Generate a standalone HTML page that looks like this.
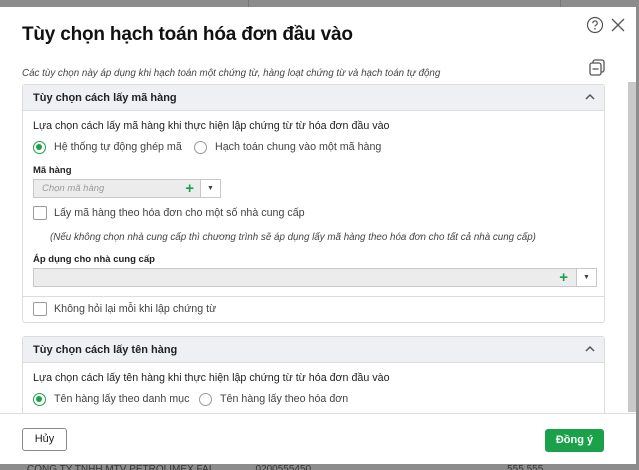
<!DOCTYPE html>
<html><head><meta charset="utf-8"><style>
*{box-sizing:border-box;margin:0;padding:0}
body{width:639px;height:470px;overflow:hidden;background:#8c8c8c;font-family:"Liberation Sans","DejaVu Sans",sans-serif;color:#212121;position:relative}
.bgline{position:absolute;top:0;width:1px;height:7px;background:#777}
.dlg{position:absolute;left:0;top:7px;width:636px;height:457px;background:#fff;overflow:hidden}
.abs{position:absolute}
h1{position:absolute;left:22px;top:17px;font-size:19px;font-weight:bold;color:#111;letter-spacing:-0.2px}
.sub{left:22px;top:61px;font-size:9.8px;font-style:italic;color:#444}
.sec{position:absolute;left:22px;width:583px;border:1px solid #dcdcdc;border-radius:3px;background:#fff}
.hd{height:26px;background:#eef0f4;border-bottom:1px solid #dcdcdc;font-size:11px;font-weight:bold;padding:7px 10px;position:relative;color:#222}
.hd .car{position:absolute;right:8px;top:6px}
.t{position:absolute;font-size:10.7px;color:#222;white-space:nowrap}
.radio{position:absolute;width:13px;height:13px;border-radius:50%;border:1px solid #999;background:#fff}
.radio.on{border:1.5px solid #1aa14a}
.radio.on::after{content:"";position:absolute;left:2px;top:2px;width:6px;height:6px;border-radius:50%;background:#1aa14a}
.cb{position:absolute;width:14px;height:14px;border:1px solid #999;border-radius:2px;background:#fff}
.inp{position:absolute;height:19px;border:1px solid #c8c8c8;background:#ececec}
.inp .plus{position:absolute;top:0;font-size:15px;line-height:17px;color:#1aa14a;font-weight:bold}
.inp .dd{position:absolute;right:0;top:0;width:20px;height:17px;border-left:1px solid #c8c8c8;background:#fff;font-size:7px;text-align:center;line-height:17px;color:#444}
.btn{position:absolute;font-size:11px;border-radius:3px;text-align:center}
</style></head><body>
<div class="bgline" style="left:248px"></div><div class="bgline" style="left:560px"></div>
<div class="dlg">
<h1>Tùy chọn hạch toán hóa đơn đầu vào</h1>
<svg class="abs" style="left:586px;top:9px" width="18" height="18" viewBox="0 0 18 18"><circle cx="9" cy="9" r="7.5" fill="none" stroke="#555" stroke-width="1.2"/><path d="M6.8 7.2a2.2 2.2 0 1 1 3 2c-.6.3-.8.7-.8 1.3" fill="none" stroke="#555" stroke-width="1.2"/><circle cx="9" cy="12.8" r=".8" fill="#555"/></svg>
<svg class="abs" style="left:610px;top:10px" width="16" height="16" viewBox="0 0 16 16"><path d="M2 2L14 14M14 2L2 14" stroke="#555" stroke-width="1.3"/></svg>
<div class="abs sub">Các tùy chọn này áp dụng khi hạch toán một chứng từ, hàng loạt chứng từ và hạch toán tự động</div>
<svg class="abs" style="left:589px;top:52px" width="17" height="18" viewBox="0 0 17 18"><rect x="1" y="4" width="11" height="12" rx="2" fill="none" stroke="#555" stroke-width="1.3"/><path d="M4 4V3a2 2 0 0 1 2-2h7a2 2 0 0 1 2 2v8a2 2 0 0 1-2 2h-1" fill="none" stroke="#555" stroke-width="1.3"/><path d="M3.5 10h6" stroke="#555" stroke-width="1.3"/></svg>
<div class="abs" style="left:628px;top:75px;width:8px;height:330px;background:#c9c9c9"></div>

<div class="sec" style="top:77px;height:239px">
 <div class="hd">Tùy chọn cách lấy mã hàng<svg class="car" width="12" height="12" viewBox="0 0 12 12"><path d="M2 8L6 4L10 8" fill="none" stroke="#555" stroke-width="1.5"/></svg></div>
 <div class="t" style="left:10px;top:35px">Lựa chọn cách lấy mã hàng khi thực hiện lập chứng từ từ hóa đơn đầu vào</div>
 <div class="radio on" style="left:10px;top:56px"></div><div class="t" style="left:31px;top:56px;color:#444">Hệ thống tự động ghép mã</div>
 <div class="radio" style="left:171px;top:56px"></div><div class="t" style="left:192px;top:56px;color:#444">Hạch toán chung vào một mã hàng</div>
 <div class="t" style="left:10px;top:80px;font-size:9.5px;font-weight:bold">Mã hàng</div>
 <div class="inp" style="left:10px;top:94px;width:188px"><span style="position:absolute;left:8px;top:3px;font-size:9.5px;font-style:italic;color:#999">Chọn mã hàng</span><span class="plus" style="right:26px">+</span><div class="dd">▼</div></div>
 <div class="cb" style="left:10px;top:121px"></div><div class="t" style="left:31px;top:122px;color:#444">Lấy mã hàng theo hóa đơn cho một số nhà cung cấp</div>
 <div class="t" style="left:27px;top:147px;font-size:9.8px;font-style:italic;color:#444">(Nếu không chọn nhà cung cấp thì chương trình sẽ áp dụng lấy mã hàng theo hóa đơn cho tất cả nhà cung cấp)</div>
 <div class="t" style="left:10px;top:169px;font-size:9.5px;font-weight:bold">Áp dụng cho nhà cung cấp</div>
 <div class="inp" style="left:10px;top:183px;width:564px"><span class="plus" style="right:28px">+</span><div class="dd">▼</div></div>
 <div class="abs" style="left:0;top:211px;width:581px;height:1px;background:#dcdcdc"></div>
 <div class="cb" style="left:10px;top:217px"></div><div class="t" style="left:31px;top:218px;color:#444">Không hỏi lại mỗi khi lập chứng từ</div>
</div>

<div class="sec" style="top:329px;height:100px">
 <div class="hd">Tùy chọn cách lấy tên hàng<svg class="car" width="12" height="12" viewBox="0 0 12 12"><path d="M2 8L6 4L10 8" fill="none" stroke="#555" stroke-width="1.5"/></svg></div>
 <div class="t" style="left:10px;top:35px">Lựa chọn cách lấy tên hàng khi thực hiện lập chứng từ từ hóa đơn đầu vào</div>
 <div class="radio on" style="left:10px;top:56px"></div><div class="t" style="left:31px;top:56px;color:#444">Tên hàng lấy theo danh mục</div>
 <div class="radio" style="left:176px;top:56px"></div><div class="t" style="left:197px;top:56px;color:#444">Tên hàng lấy theo hóa đơn</div>
</div>

<div class="abs" style="left:0;top:406px;width:636px;height:51px;background:#fff;border-top:1px solid #ddd"></div>
<div class="btn" style="left:22px;top:421px;width:45px;height:23px;border:1px solid #888;line-height:21px;color:#222">Hủy</div>
<div class="btn" style="left:545px;top:422px;width:59px;height:23px;background:#1aa14a;color:#fff;font-weight:bold;line-height:23px">Đồng ý</div>
</div>
<div class="abs" style="left:27px;top:464px;width:600px;height:6px;overflow:hidden;font-size:10px;line-height:12px;color:#333;white-space:nowrap">CÔNG TY TNHH MTV PETROLIMEX FAI<span style="margin-left:44px">0200555450</span><span style="margin-left:196px">555.555</span><span style="margin-left:100px">44.444</span></div>
</body></html>
